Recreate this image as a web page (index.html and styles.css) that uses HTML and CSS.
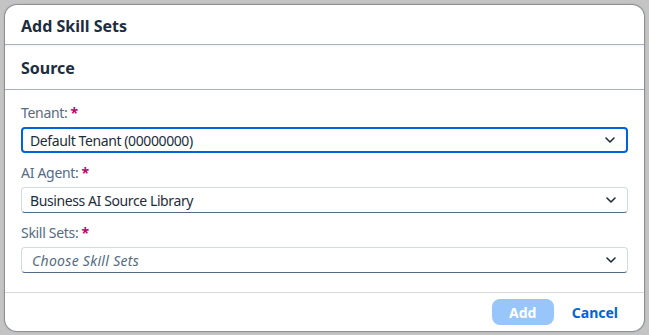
FILE: index.html
```html
<!DOCTYPE html>
<html lang="en">
<head>
<meta charset="utf-8">
<title>Add Skill Sets</title>
<link rel="stylesheet" href="styles.css">
</head>
<body>
<div class="dialog" role="dialog" aria-labelledby="dlg-title">
  <header class="dlg-header">
    <h1 id="dlg-title" class="dlg-title">Add Skill Sets</h1>
  </header>
  <div class="dlg-subheader">
    <h2 class="section-title">Source</h2>
  </div>
  <form class="dlg-form">
    <div class="field">
      <label class="field-label">Tenant:<span class="req">*</span></label>
      <div class="select focused">
        <span class="select-value">Default Tenant (00000000)</span>
        <span class="select-arrow"><svg width="10" height="6" viewBox="0 0 10 6"><path d="M1 1l4 4 4-4" fill="none" stroke="#1d2d3e" stroke-width="1.6" stroke-linecap="round" stroke-linejoin="round"/></svg></span>
      </div>
    </div>
    <div class="field">
      <label class="field-label">AI Agent:<span class="req">*</span></label>
      <div class="select">
        <span class="select-value">Business AI Source Library</span>
        <span class="select-arrow"><svg width="10" height="6" viewBox="0 0 10 6"><path d="M1 1l4 4 4-4" fill="none" stroke="#1d2d3e" stroke-width="1.6" stroke-linecap="round" stroke-linejoin="round"/></svg></span>
      </div>
    </div>
    <div class="field">
      <label class="field-label">Skill Sets:<span class="req">*</span></label>
      <div class="select">
        <span class="select-value placeholder">Choose Skill Sets</span>
        <span class="select-arrow"><svg width="10" height="6" viewBox="0 0 10 6"><path d="M1 1l4 4 4-4" fill="none" stroke="#1d2d3e" stroke-width="1.6" stroke-linecap="round" stroke-linejoin="round"/></svg></span>
      </div>
    </div>
  </form>
  <footer class="dlg-footer">
    <button class="btn btn-emph" type="button" disabled>Add</button>
    <button class="btn btn-trans" type="button">Cancel</button>
  </footer>
</div>
</body>
</html>
```
FILE: styles.css
```css
* { box-sizing: border-box; }
html, body { margin: 0; }
body {
  background: #c4c4c4;
  padding: 5px;
  font-family: "Noto Sans", "Liberation Sans", sans-serif;
  font-size: 14px;
  color: #1d2d3e;
}
.dialog {
  width: 639px;
  height: 326px;
  background: #fff;
  border-radius: 12px;
  box-shadow: 0 0 0 1px rgba(70, 80, 90, 0.35), 0 0 3px rgba(0, 0, 0, 0.25);
  display: flex;
  flex-direction: column;
  overflow: hidden;
}
.dlg-header {
  height: 40px;
  border-bottom: 1px solid #a8b2bd;
  display: flex;
  align-items: center;
  padding: 0 16px;
}
.dlg-title, .section-title {
  margin: 0;
  font-size: 16px;
  font-weight: 700;
  color: #1d2d3e;
  padding-top: 2px;
}
.dlg-subheader {
  height: 45px;
  border-bottom: 1px solid #a8b2bd;
  display: flex;
  align-items: center;
  padding: 0 16px;
  box-shadow: inset 0 2px 3px -1px rgba(120, 140, 170, 0.12);
}
.dlg-form {
  flex: 1;
  padding: 14px 16px 0;
  display: flex;
  flex-direction: column;
  gap: 11px;
}
.field { display: flex; flex-direction: column; }
.field-label {
  line-height: 18px;
  height: 18px;
  margin-bottom: 5px;
  color: #556b82;
  letter-spacing: -0.3px;
}
.req {
  color: #ba066c;
  font-weight: 700;
  margin-left: 3px;
}
.select {
  height: 26px;
  border: 1px solid #d5dadd;
  border-bottom-color: #556b81;
  border-radius: 4px;
  display: flex;
  align-items: center;
  padding-left: 8px;
  background: #fff;
}
.select.focused {
  border: 2px solid #0064d9;
  padding-left: 7px;
}
.select-value { flex: 1; white-space: nowrap; letter-spacing: -0.4px; }
.placeholder {
  color: #556b82;
  font-style: italic;
  letter-spacing: 0.3px;
  padding-left: 2px;
}
.select-arrow {
  width: 32px;
  display: flex;
  justify-content: center;
  align-items: center;
}
.dlg-footer {
  height: 39px;
  border-top: 1px solid #d9d9d9;
  display: flex;
  align-items: center;
  justify-content: flex-end;
  padding: 0 16px;
  gap: 8px;
}
.btn {
  font-family: inherit;
  font-size: 14px;
  font-weight: 700;
  height: 26px;
  border-radius: 8px;
  border: none;
  padding: 0 10px;
  cursor: pointer;
}
.btn-emph {
  background: #99c6fa;
  color: #fff;
  width: 62px;
}
.btn-trans {
  background: transparent;
  color: #0064d9;
}
```
